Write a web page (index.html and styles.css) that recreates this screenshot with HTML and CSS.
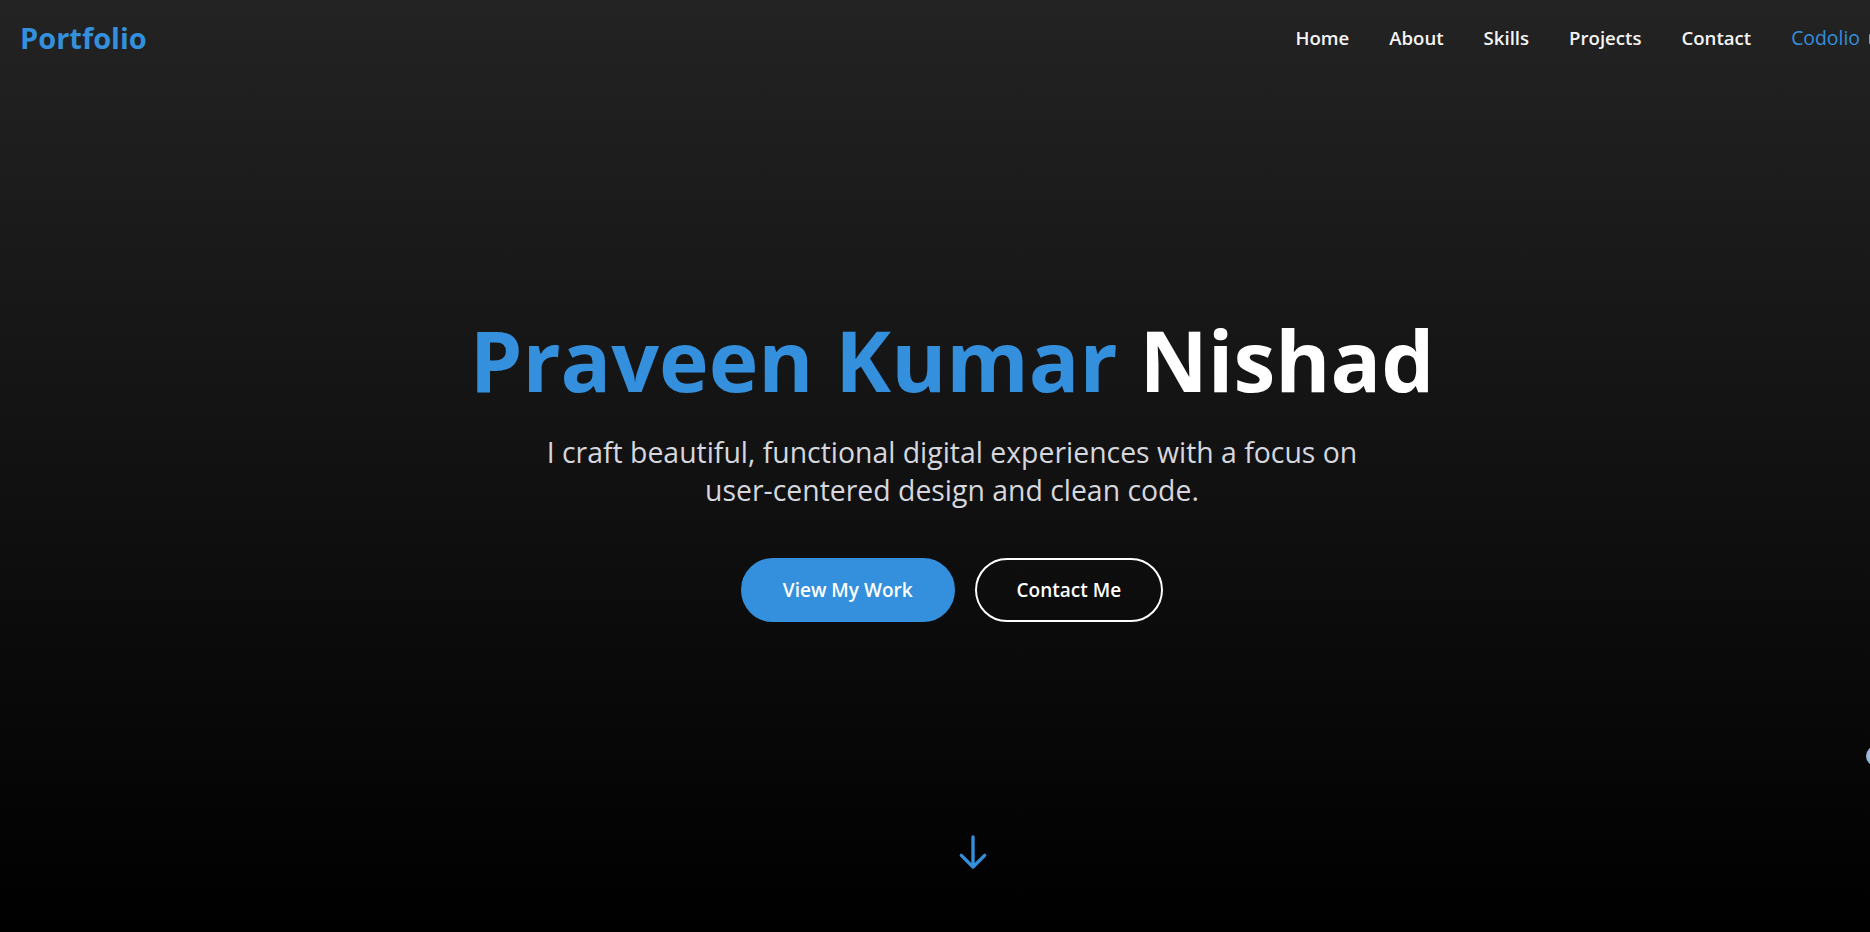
FILE: index.html
```html
<!DOCTYPE html>
<html lang="en">
<head>
<meta charset="utf-8">
<title>Portfolio</title>
<link rel="stylesheet" href="styles.css">
</head>
<body>
<div class="page">
  <header class="header">
    <a class="logo" href="#">Portfolio</a>
    <nav class="nav">
      <a href="#" class="nav-link">Home</a>
      <a href="#" class="nav-link">About</a>
      <a href="#" class="nav-link">Skills</a>
      <a href="#" class="nav-link">Projects</a>
      <a href="#" class="nav-link">Contact</a>
      <a href="#" class="nav-link nav-codolio">Codolio
        <svg class="ext-icon" viewBox="0 0 24 24" fill="none" stroke="currentColor" stroke-width="2" stroke-linecap="round" stroke-linejoin="round"><path d="M18 13v6a2 2 0 0 1-2 2H5a2 2 0 0 1-2-2V8a2 2 0 0 1 2-2h6"/><polyline points="15 3 21 3 21 9"/><line x1="10" y1="14" x2="21" y2="3"/></svg>
      </a>
    </nav>
  </header>

  <section class="hero">
    <div class="hero-content">
      <h1 class="hero-title"><span class="accent">Praveen Kumar</span> Nishad</h1>
      <p class="hero-sub">I craft beautiful, functional digital experiences with a focus on user-centered design and clean code.</p>
      <div class="hero-actions">
        <a href="#" class="btn btn-primary">View My Work</a>
        <a href="#" class="btn btn-outline">Contact Me</a>
      </div>
    </div>
    <a href="#" class="scroll-down" aria-label="Scroll down">
      <svg viewBox="0 0 24 24" fill="none" stroke="currentColor" stroke-width="2" stroke-linecap="round" stroke-linejoin="round"><path d="M19 14l-7 7m0 0l-7-7m7 7V3"/></svg>
    </a>
    <span class="orb"></span>
  </section>
</div>
</body>
</html>
```

FILE: styles.css
```css
* { box-sizing: border-box; }

html {
  overflow: hidden;
  background: #000;
}

body {
  margin: 0;
  font-family: "Open Sans", "Noto Sans", "Liberation Sans", sans-serif;
  color: #fff;
}

a { text-decoration: none; color: inherit; }

.page {
  width: 1904px;
  position: relative;
}

.header {
  position: absolute;
  top: 0;
  left: 0;
  right: 0;
  z-index: 10;
  display: flex;
  align-items: center;
  justify-content: space-between;
  height: 75px;
  padding: 0 20px;
}

.logo {
  font-size: 29px;
  font-weight: 700;
  color: #3490dc;
}

.nav {
  display: flex;
  align-items: center;
  gap: 40px;
}

.nav-link {
  font-size: 18.6px;
  font-weight: 600;
  color: #f4f4f4;
}

.nav-codolio {
  color: #3490dc;
  font-weight: 400;
  font-size: 19.4px;
  display: flex;
  align-items: center;
  gap: 8px;
}

.ext-icon {
  width: 16px;
  height: 16px;
  color: #cfd6e0;
}

.hero {
  position: relative;
  height: 932px;
  display: flex;
  align-items: center;
  justify-content: center;
  background: linear-gradient(to bottom, #232323 0%, #000 100%);
}

.hero-content {
  text-align: center;
}

.hero-title {
  margin: 0 0 22px;
  font-size: 84px;
  font-weight: 700;
  line-height: 1.2;
  color: #fff;
}

.accent { color: #3490dc; }

.hero-sub {
  margin: 0 auto 48px;
  max-width: 850px;
  font-size: 28.4px;
  line-height: 38.5px;
  color: #d6d7de;
}

.hero-actions {
  display: flex;
  justify-content: center;
  gap: 20px;
}

.btn {
  display: inline-block;
  padding: 16px 40px;
  border-radius: 999px;
  font-size: 19px;
  font-weight: 600;
  line-height: 28px;
  border: 2px solid transparent;
}

.btn-primary {
  background: #3490dc;
  border-color: #3490dc;
  color: #fff;
}

.btn-outline {
  border-color: #fff;
  color: #fff;
}

.scroll-down {
  position: absolute;
  left: 50%;
  bottom: 60px;
  width: 42px;
  height: 40px;
  color: #3490dc;
}

.scroll-down svg {
  width: 42px;
  height: 40px;
  display: block;
}

.orb {
  position: absolute;
  left: 1866px;
  top: 746px;
  width: 20px;
  height: 20px;
  border-radius: 50%;
  background: linear-gradient(160deg, #b8a6e8, #6fd0c0);
}
```
